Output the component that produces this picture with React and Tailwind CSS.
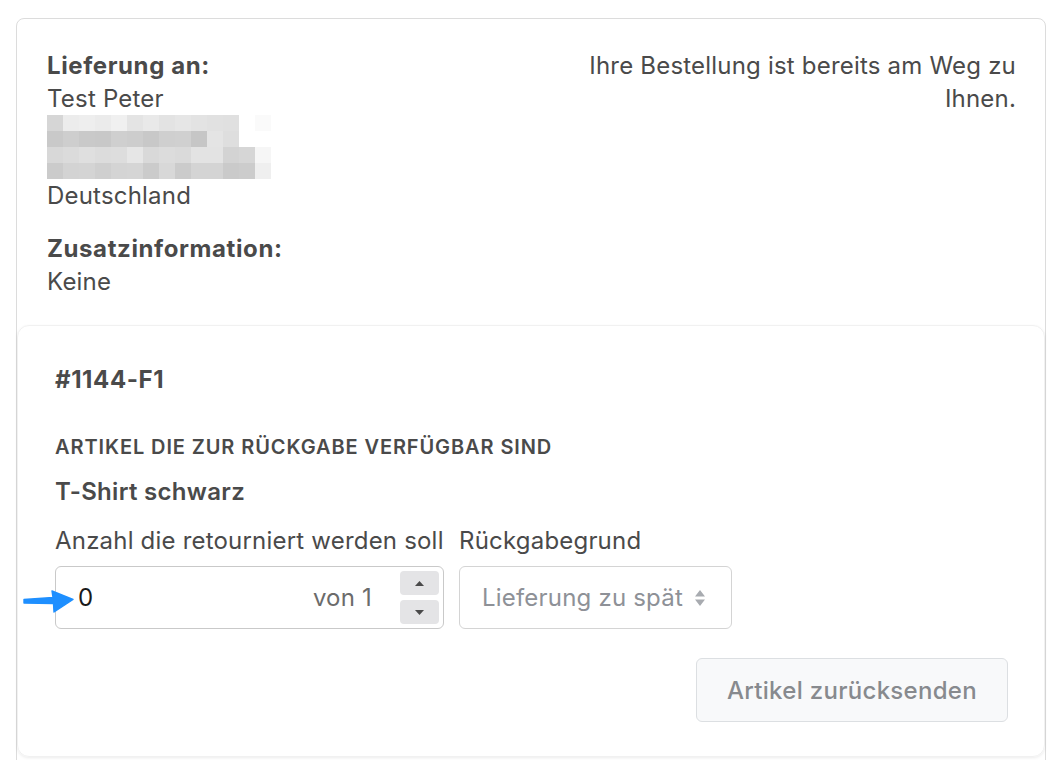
import React from "react";

const blurRows = [
  ["#d6d6d6", "#ececec", "#eeeeee", "#ebebeb", "#f0f0f0", "#e4e4e4", "#e9e9e9", "#e3e3e3", "#e6e6e6", "#e3e3e3", "#e1e1e1", "#e0e0e0", "#ffffff", "#fafafa", "#ffffff"],
  ["#c9c9c9", "#cecece", "#c9c9c9", "#c8c8c8", "#cfcfcf", "#cdcdcd", "#c8c8c8", "#cfcfcf", "#d0d0d0", "#c6c6c6", "#e4e4e4", "#dedede", "#ffffff", "#ffffff", "#ffffff"],
  ["#d8d8d8", "#dbdbdb", "#dfdfdf", "#dcdcdc", "#dddddd", "#e6e6e6", "#d9d9d9", "#dcdcdc", "#dadada", "#e3e3e3", "#e3e3e3", "#d3d3d3", "#d6d6d6", "#f6f6f6", "#ffffff"],
  ["#cbcbcb", "#d3d3d3", "#d4d4d4", "#cfcfcf", "#d4d4d4", "#d5d5d5", "#cbcbcb", "#d8d8d8", "#cbcbcb", "#d4d4d4", "#d4d4d4", "#cacaca", "#cccccc", "#efefef", "#ffffff"],
];

const BlurredAddress = () => (
  <div className="flex flex-col">
    {blurRows.map((row, r) => (
      <div key={r} className="flex">
        {row.map((c, i) => (
          // pixelated placeholder, colour comes from the data
          <div key={i} className="w-4 h-4" style={{ backgroundColor: c }} />
        ))}
      </div>
    ))}
  </div>
);

const Arrow = () => (
  <svg width="56" height="28" viewBox="0 0 56 28" className="absolute left-[-35px] top-[21px]">
    <path
      d="M3 11.5 L32 9.5 L31 3 L52 11.5 L33 24 L32.5 15.5 L3 15 Z"
      fill="#1e8fff"
      stroke="#1e8fff"
      strokeWidth="1.4"
      strokeLinejoin="round"
    />
  </svg>
);

export default function App() {
  return (
    <div className="min-h-[760px] bg-white pt-[18px] pl-4 overflow-hidden" style={{ fontFamily: "Inter, 'Liberation Sans', sans-serif" }}>
      <div className="w-[1030px] border border-[#dcdcdc] rounded-lg text-[#4a4a4a] text-[24px] leading-[33px] tracking-[0.2px] pb-6">
        <div className="grid grid-cols-2 pl-[30px] pr-[29px] pt-[30px] pb-[27px]">
          <div>
            <div className="font-bold tracking-[0.6px]">Lieferung an:</div>
            <div>Test Peter</div>
            <BlurredAddress />
            <div>Deutschland</div>
            <div className="font-bold tracking-[0.6px] mt-[20px]">Zusatzinformation:</div>
            <div>Keine</div>
          </div>
          <div className="text-right">Ihre Bestellung ist bereits am Weg zu Ihnen.</div>
        </div>

        <div className="rounded-xl border border-[#f1f1f1] shadow-[0_1px_3px_rgba(0,0,0,0.08)] pl-[37px] pr-[36px] pt-[37px] pb-[34px]">
          <div className="font-bold tracking-[0.6px]">#1144-F1</div>
          <div className="mt-[35px] text-[20px] font-semibold uppercase tracking-[0.9px]">
            Artikel die zur Rückgabe verfügbar sind
          </div>
          <div className="mt-[11px] font-semibold tracking-[0.3px]">T-Shirt schwarz</div>
          <div className="mt-[16px] flex gap-[15px]">
            <div className="w-[389px]">
              <div>Anzahl die retourniert werden soll</div>
              <div className="relative mt-[9px] h-[63px] border border-[#c9c9c9] rounded-md flex items-center pl-[22px] pr-1">
                <Arrow />
                <span className="text-[#1a1a1a] flex-1">0</span>
                <span className="text-[#6b6b6b] mr-[28px]">von 1</span>
                <div className="flex flex-col gap-[5px]">
                  <button className="w-[39px] h-[24px] bg-[#e4e4e6] rounded-[4px] flex items-center justify-center">
                    <svg width="9" height="5" viewBox="0 0 9 5"><path d="M4.5 0 L9 5 L0 5 Z" fill="#4a4a4a" /></svg>
                  </button>
                  <button className="w-[39px] h-[24px] bg-[#e4e4e6] rounded-[4px] flex items-center justify-center">
                    <svg width="9" height="5" viewBox="0 0 9 5"><path d="M0 0 L9 0 L4.5 5 Z" fill="#4a4a4a" /></svg>
                  </button>
                </div>
              </div>
            </div>
            <div>
              <div>Rückgabegrund</div>
              <div className="mt-[9px] h-[63px] w-[273px] border border-[#d4d4d4] rounded-md flex items-center pl-[22px] text-[#8e9197]">
                <span>Lieferung zu spät</span>
                <svg width="10" height="18" viewBox="0 0 10 18" className="ml-[12px]">
                  <path d="M5 1 L10 7.5 L0 7.5 Z M0 10.5 L10 10.5 L5 17 Z" fill="#a8abb0" />
                </svg>
              </div>
            </div>
          </div>
          <div className="flex justify-end mt-[29px]">
            <button className="w-[312px] h-[64px] bg-[#f8f9fa] border border-[#dcdfe2] rounded-md text-[#878a8e] font-medium tracking-[0.3px]">
              Artikel zurücksenden
            </button>
          </div>
        </div>
      </div>
    </div>
  );
}
